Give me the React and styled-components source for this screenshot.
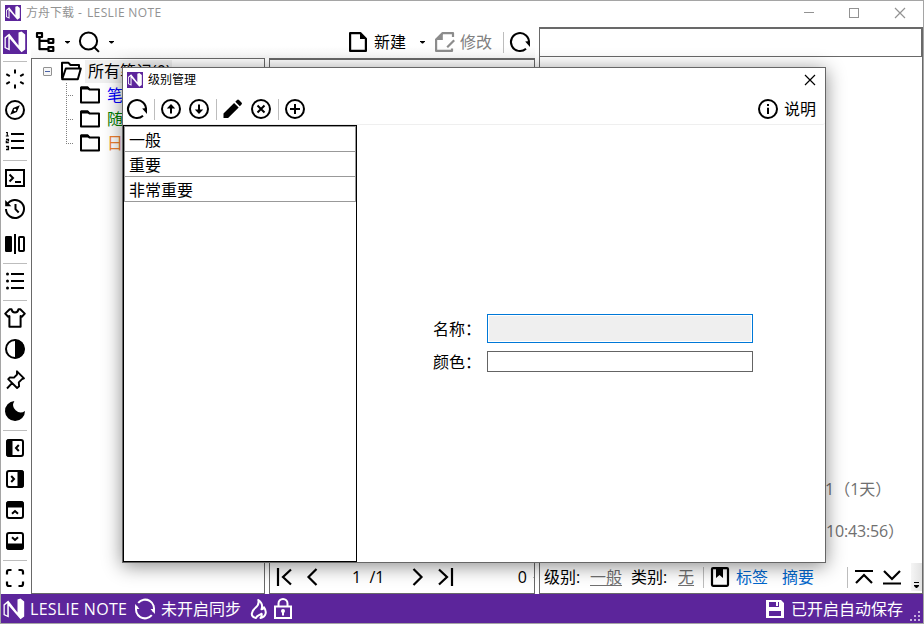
import React from "react";
import styled, { createGlobalStyle } from "styled-components";

const PURPLE = "#5c259b";
const LINE = "#696969";

const Global = createGlobalStyle`
  * { box-sizing: border-box; }
  body { margin: 0; background: #fff; overflow: hidden; }
  button { font: inherit; color: inherit; background: none; border: 0; padding: 0; }
`;

/* ---------- shared parts ---------- */

const Svg = styled.svg`
  display: block;
  flex: none;
  width: ${(p) => p.$w || 24}px;
  height: ${(p) => p.$h || p.$w || 24}px;
  margin-left: ${(p) => p.$ml || 0}px;
  color: ${(p) => p.$color || "inherit"};
`;

const Label = styled.span`
  font-size: ${(p) => p.$size || 16}px;
  line-height: 24px;
  width: ${(p) => (p.$w ? `${p.$w}px` : "auto")};
  color: ${(p) => p.$color || "inherit"};
  letter-spacing: ${(p) => p.$spacing || 0}px;
  margin-left: ${(p) => p.$ml || 0}px;
  white-space: pre;
  flex: none;
`;

const Link = styled(Label)`
  text-decoration: ${(p) => (p.$underline ? "underline" : "none")};
  text-decoration-thickness: 1px;
  text-underline-offset: 2px;
`;

const IconButton = styled.button`
  display: flex;
  align-items: center;
  height: 24px;
  flex: none;
  margin-left: ${(p) => p.$ml || 0}px;
  color: ${(p) => p.$color || "inherit"};
`;

const Divider = styled.i`
  width: 1px;
  height: ${(p) => p.$h || 21}px;
  margin-left: ${(p) => p.$ml || 0}px;
  background: #bdbdbd;
  flex: none;
`;

const Spacer = styled.i`
  flex: 1;
`;

const Caret = styled.i`
  width: 5px;
  height: 3px;
  margin-left: ${(p) => p.$ml}px;
  background: #000;
  clip-path: polygon(0 0, 100% 0, 100% 34%, 60% 100%, 40% 100%, 0 34%);
  flex: none;
`;

/* Icons are drawn on a 24-unit grid. */
const ring = <circle cx="12" cy="12" r="9" strokeWidth="2" />;
const glyphs = {
  tree: (
    <g strokeWidth="2.2" strokeLinejoin="round">
      <rect x="4" y="3.2" width="5" height="3.8" />
      <rect x="15.5" y="9" width="4.8" height="3.8" />
      <rect x="15.5" y="17.2" width="4.8" height="3.8" />
      <path d="M6.5 7v12.2h9M6.5 10.9h9" />
    </g>
  ),
  search: (
    <g strokeWidth="2">
      <circle cx="11.5" cy="11" r="8.6" />
      <path d="m17.3 17.3 4.6 4.6" />
    </g>
  ),
  file: (
    <g strokeWidth="2.2">
      <path d="M4.1 3.1h10.2l5.6 5.6v12.2H4.1z" strokeLinejoin="round" />
      <path d="M14 3v6h6z" fill="currentColor" stroke="none" />
    </g>
  ),
  edit: (
    <g strokeWidth="2.2">
      <path d="M20 7V3.1H9.6L3.1 9.6v11.3H19v-2.4" strokeLinejoin="round" />
      <path d="M9.8 3v7H3z" fill="currentColor" stroke="none" />
      <path d="m14.2 17.2 7-7" />
    </g>
  ),
  refresh: (
    <g strokeWidth="2">
      <path d="M18 18.7A9 9 0 1 1 20.9 13" />
      <path d="m17.2 11.5 4.8-.5v6z" fill="currentColor" stroke="none" />
    </g>
  ),
  sync: (
    <g strokeWidth="2">
      <path d="M5.2 5.8A9 9 0 0 1 20.4 15M18.8 18.2A9 9 0 0 1 3.6 9" />
      <path d="m17.5 12h4.4v5zM6.5 12H2.1V7z" fill="currentColor" stroke="none" />
    </g>
  ),
  spinner: (
    <path
      strokeWidth="2"
      d="M12 2.5v4M12 17.5v4M3.3 7.2l3.5 2M17.2 14.8l3.5 2M3.3 16.8l3.5-2M17.2 9.2l3.5-2"
    />
  ),
  compass: (
    <g>
      {ring}
      <path
        fillRule="evenodd"
        fill="currentColor"
        stroke="none"
        d="m16.8 7.2-2.9 6.7-6.7 2.9 2.9-6.7zM12 10.7a1.3 1.3 0 1 0 0 2.6 1.3 1.3 0 0 0 0-2.6z"
      />
    </g>
  ),
  ordered: (
    <g strokeWidth="2">
      <path d="M8 5h13M8 12h13M8 19h13" />
      <path
        strokeWidth="1.2"
        d="M3 3.5h1.3V7M2.8 7h3M3 10.3h2.5v1.7H3.3v1.7h2.5M3 17.3h2.5v3.4H3M3.5 19h2"
      />
    </g>
  ),
  terminal: (
    <g strokeWidth="2">
      <rect x="3" y="4" width="18" height="16" />
      <path d="m6.5 8.5 3.5 3.5-3.5 3.5M12 16h6" />
    </g>
  ),
  history: (
    <g strokeWidth="2">
      <path d="M4.2 7.5A9 9 0 1 1 3 12" />
      <path d="M2.2 3v6.2h6.2z" fill="currentColor" stroke="none" />
      <path d="M12.5 7v5.2l3.2 3.3" />
    </g>
  ),
  compare: (
    <g>
      <rect x="2" y="4" width="7" height="16" rx="1.2" fill="currentColor" stroke="none" />
      <path d="M12 2v20" strokeWidth="2" />
      <rect x="16" y="5" width="5" height="14" rx=".8" strokeWidth="2" />
    </g>
  ),
  list: (
    <g strokeWidth="2">
      <path d="M8 5h13M8 12h13M8 19h13" />
      <g fill="currentColor" stroke="none">
        <circle cx="4.5" cy="5" r="1.5" />
        <circle cx="4.5" cy="12" r="1.5" />
        <circle cx="4.5" cy="19" r="1.5" />
      </g>
    </g>
  ),
  shirt: (
    <path
      strokeWidth="2"
      strokeLinejoin="round"
      d="M8.5 3.2 6.7 3.2 2.2 7.6l3 3.2 1.2-.8v10.8h11.2V10l1.2.8 3-3.2-4.5-4.4h-1.8C15.2 5.5 13.8 6.5 12 6.5S8.8 5.5 8.5 3.2z"
    />
  ),
  contrast: (
    <g>
      {ring}
      <path d="M12 2.5a9.5 9.5 0 0 1 0 19z" fill="currentColor" stroke="none" />
    </g>
  ),
  pin: (
    <path
      strokeWidth="1.9"
      strokeLinejoin="round"
      d="m14 3.3 7 7-2 .8-3.2 3.2.3 4-2 1.7L5.2 11.1l1.7-1.7 4.1.2 3-3.1zM9.5 14.7 4 20.5"
    />
  ),
  moon: (
    <path
      fill="currentColor"
      stroke="none"
      d="M11.4 2a7.4 7.4 0 0 0 10.6 9.9 10 10 0 1 1-10.6-9.9z"
    />
  ),
  fullscreen: (
    <path
      strokeWidth="2.2"
      d="M4 8.5V6a2 2 0 0 1 2-2h2.5M15.5 4H18a2 2 0 0 1 2 2v2.5M20 15.5V18a2 2 0 0 1-2 2h-2.5M8.5 20H6a2 2 0 0 1-2-2v-2.5"
    />
  ),
  up: (
    <g>
      {ring}
      <path d="M12 16.5v-6" strokeWidth="2" />
      <path d="m12 7 4.2 4.5H7.8z" fill="currentColor" stroke="none" />
    </g>
  ),
  down: (
    <g>
      {ring}
      <path d="M12 7.5v6" strokeWidth="2" />
      <path d="m12 17-4.2-4.5h8.4z" fill="currentColor" stroke="none" />
    </g>
  ),
  pencil: (
    <path
      fill="currentColor"
      stroke="none"
      d="M2.500 16.500 13.100 5.900l4.600 4.600L7.100 21H2.500zM14.300 4.700l1.700-1.700a1.400 1.400 0 0 1 2 0l2.500 2.500a1.400 1.400 0 0 1 0 2l-1.700 1.700z"
    />
  ),
  cancel: (
    <g>
      {ring}
      <path d="m8.5 8.5 7 7m0-7-7 7" strokeWidth="2" />
    </g>
  ),
  plus: (
    <g>
      {ring}
      <path d="M12 7v10M7 12h10" strokeWidth="2" />
    </g>
  ),
  info: (
    <g>
      {ring}
      <path d="M12 10.8V17M12 7v2" strokeWidth="2" />
    </g>
  ),
  folder: (
    <g strokeWidth="2">
      <path d="M3 19.5v-15h6.5l2 2H21v13z" strokeLinejoin="round" />
      <path d="M3 3.5h7l2.5 3H3z" fill="currentColor" stroke="none" />
    </g>
  ),
  folderOpen: (
    <path
      strokeWidth="2"
      strokeLinejoin="round"
      d="M3 19.5V3.8h6.5l2 2.2H20v3M3.2 20.2 6.8 9.500h15l-3 10.700z"
    />
  ),
  flame: (
    <path
      strokeWidth="2"
      strokeLinejoin="round"
      d="M9 21C2.5 19.5 4.5 14 8.5 10.8c2.5-2 3.7-4.5 2.800-7.800 3.700 2.500 4.400 6 3.200 9.300 1.300 0 2.200-.8 2.500-2 3 4.200 2.300 9.200-3.500 10.700 1.300-1.500 1.500-3 1-4.300-1.500 1.500-4.500 1.300-5.500 4.300z"
    />
  ),
  lock: (
    <g strokeWidth="2">
      <path d="M4 9.5h16V21H4z" />
      <path d="M7.5 9V6.500a4.500 4.500 0 0 1 9 0V9M12 14.500v4" />
      <circle cx="12" cy="14" r="2" fill="currentColor" stroke="none" />
    </g>
  ),
  save: (
    <path
      fill="currentColor"
      stroke="none"
      fillRule="evenodd"
      d="M3 3h15l3 3v15H3zM6 5v5h10V5zM6 14v5h12v-5zM13 5h2v4h-2z"
    />
  ),
  bookmark: (
    <g>
      <rect x="4" y="3.2" width="16" height="17.6" rx="1" strokeWidth="2.2" />
      <path d="M8 3h7v10l-3.5-3L8 13z" fill="currentColor" stroke="none" />
    </g>
  ),
  first: <path strokeWidth="2.2" d="M6 3v18M19 4.5 11 12l8 7.5" />,
  prev: <path strokeWidth="2.2" d="m16.500 4-8 8 8 8" />,
  next: <path strokeWidth="2.2" d="m7.500 4 8 8-8 8" />,
  last: <path strokeWidth="2.2" d="M18 3v18M5 4.5 13 12l-8 7.5" />,
  top: <path strokeWidth="2.2" d="M3 6h18M4 18l8-8 8 8" />,
  bottom: <path strokeWidth="2.2" d="M3 18.5h18M4 6l8 8 8-8" />,
  close: <path strokeWidth="1.2" d="m7 7 10 10m0-10L7 17" />,
  minimize: <path strokeWidth="1" d="M7 11.5h10" />,
  maximize: <rect x="7.5" y="7.5" width="9" height="9" strokeWidth="1" />,
};

/* A rounded panel with one thick edge, turned towards each side of the window. */
const panelTurns = { panelLeft: 0, panelRight: 180, panelTop: 90, panelBottom: 270 };

const Icon = ({ name, size, color }) => (
  <Svg $w={size} $color={color} viewBox="0 0 24 24" fill="none" stroke="currentColor">
    {name in panelTurns ? (
      <g transform={`rotate(${panelTurns[name]} 12 12)`}>
        <rect x="4" y="4" width="16" height="16" rx="2" strokeWidth="2" />
        <path d="M4 4h5v16H4z" fill="currentColor" />
        <path d="m15.8 9-2.8 3 2.8 3" strokeWidth="2" />
      </g>
    ) : (
      glyphs[name]
    )}
  </Svg>
);

const Logo = ({ size, bare }) => (
  <Svg $w={size} viewBox="0 0 24 24">
    {!bare && <path d="M0 0h24v24H0z" fill={PURPLE} />}
    <path
      fill="#fff"
      d="M1.5 7.500 6.200 3.500 15.500 15.500V2.500l3-1 3.700 3v15l-3.700 2.800L6.800 8.700V20.500L1.500 18zM2.800 8.200v9l2.500 1.200V6.200z"
      fillRule="evenodd"
    />
  </Svg>
);

/* ---------- main window ---------- */

const Window = styled.div`
  position: relative;
  display: flex;
  flex-direction: column;
  width: 924px;
  height: 624px;
  border: 1px solid #a5a5a5;
  background: #fff;
  color: #000;
  font-family: "Open Sans", "Noto Sans CJK SC", sans-serif;
  overflow: hidden;
`;

const TitleBar = styled.header`
  display: flex;
  align-items: center;
  height: 26px;
  flex: none;
  padding: 0 11px 2px 4px;
  color: #929292;
`;

const Body = styled.main`
  display: flex;
  height: 567px;
  flex: none;
`;

const Rail = styled.nav`
  width: 30px;
  flex: none;
  display: flex;
  flex-direction: column;
`;

const RailLogo = styled.div`
  height: 30px;
  padding: 3px 2px;
`;

const RailItem = styled.button`
  display: flex;
  align-items: flex-start;
  height: ${(p) => (p.$tall ? 35 : 31)}px;
  padding: ${(p) => (p.$tall ? 8 : 4)}px 2px 0;
`;

const RailRule = styled.i`
  height: 1px;
  width: 24px;
  margin: 4px 2px 1px;
  background: #bdbdbd;
`;

const LeftSide = styled.div`
  width: 504px;
  margin-right: 4px;
  display: flex;
  flex-direction: column;
`;

const Toolbar = styled.div`
  display: flex;
  align-items: center;
  height: 31px;
  flex: none;
  padding: 0 3px 1px 2px;
  background: linear-gradient(#fff 60%, #f7f7f7);
`;

const Panes = styled.div`
  display: flex;
  gap: 4px;
  flex: 1;
`;

const TreePane = styled.section`
  width: 234px;
  border: 1px solid ${LINE};
  padding-left: 10px;
`;

const ListPane = styled.section`
  flex: 1;
  display: flex;
  flex-direction: column;
  justify-content: flex-end;
  border: 1px solid ${LINE};
  border-top-width: 2px;
`;

const BottomBar = styled.footer`
  display: flex;
  align-items: center;
  height: 30px;
  padding-bottom: 2px;
  flex: none;
`;

const RootRow = styled.div`
  display: flex;
  align-items: center;
  height: 24px;
`;

const Expander = styled.i`
  width: 9px;
  height: 9px;
  margin: 0 7px 0 1px;
  border: 1px solid #919191;
  border-radius: 1px;
  background: linear-gradient(#4b63a7, #4b63a7) center / 5px 1px no-repeat, #f6f6f6;
`;

const RootName = styled.span`
  height: 23px;
  line-height: 22px;
  width: 87px;
  margin-left: 2px;
  padding-left: 3px;
  font-size: 16px;
  background: #f0f0f0;
  white-space: nowrap;
`;

const Branch = styled.div`
  margin-left: 24px;
  width: 64px;
`;

const ChildRow = styled.div`
  display: flex;
  align-items: center;
  height: 24px;
  color: ${(p) => p.$color};
`;

const Elbow = styled.i`
  align-self: flex-start;
  width: 8px;
  margin-right: 4px;
  height: ${(p) => (p.$last ? 13 : 24)}px;
  background:
    repeating-linear-gradient(#808080 0 1px, transparent 1px 2px) 0 0 / 1px 100% no-repeat,
    repeating-linear-gradient(90deg, #808080 0 1px, transparent 1px 2px) 0 12px / 100% 1px no-repeat;
`;

const RightSide = styled.section`
  flex: 1;
  display: flex;
  flex-direction: column;
  border: 1px solid ${LINE};
  border-top-width: 2px;
`;

const NoteTitle = styled.div`
  height: 28px;
  flex: none;
  border-right: 1px solid ${LINE};
  border-bottom: 1px solid ${LINE};
`;

const NoteBody = styled.div`
  flex: 1;
  display: flex;
  flex-direction: column;
  justify-content: flex-end;
  align-items: flex-start;
  gap: 18px;
  padding: 0 0 20px 285px;
  color: #707070;
`;

const Overflow = styled.button`
  display: flex;
  flex-direction: column;
  align-items: center;
  justify-content: flex-end;
  gap: 2px;
  width: 11px;
  height: 28px;
  padding-bottom: 3px;
  background: linear-gradient(90deg, #f5f5f5, #e2e2e2);
`;

const OverflowBar = styled.i`
  width: 5px;
  height: 1px;
  background: #000;
`;

const StatusBar = styled.footer`
  display: flex;
  align-items: center;
  height: 29px;
  flex: none;
  padding: 0 2px 0 1px;
  color: #fff;
  background: ${PURPLE};
`;

/* ---------- dialog ---------- */

const Dialog = styled.div`
  position: absolute;
  left: 121px;
  top: 66px;
  width: 704px;
  height: 496px;
  display: flex;
  flex-direction: column;
  border: 1px solid #666;
  background: #fff;
  box-shadow: 0 3px 18px rgba(0, 0, 0, 0.46);
`;

const DialogTitle = styled.div`
  display: flex;
  align-items: center;
  height: 24px;
  padding: 0 3px 0 4px;
`;

const DialogTools = styled.div`
  display: flex;
  align-items: center;
  height: 33px;
  padding: 2px 9px 0 2px;
  border-bottom: 1px solid #efefef;
  border-radius: 0 0 3px 0;
`;

const DialogBody = styled.div`
  display: flex;
  flex: 1;
`;

const Levels = styled.ul`
  width: 234px;
  margin: 0;
  padding: 0;
  list-style: none;
  border: 1px solid #000;
`;

const Level = styled.li`
  height: 25px;
  padding-left: 4px;
  font-size: 16px;
  line-height: 27px;
  border: 1px solid #999;
  border-top: 0;
  &:first-child {
    border-top: 1px solid #999;
    height: 26px;
  }
`;

const Form = styled.form`
  display: grid;
  grid-template-columns: 54px 266px;
  row-gap: 7px;
  align-items: center;
  align-content: start;
  padding: 189px 0 0 76px;
`;

const NameField = styled.input`
  height: 29px;
  border: 1px solid #0078d7;
  border-radius: 0;
  outline: 0;
  box-shadow: inset 0 0 0 1px #fff;
  background: #efefef;
`;

const ColorField = styled.div`
  height: 21px;
  margin-bottom: 1px;
  border: 1px solid #646464;
`;

const railGroups = [
  ["spinner", "compass", "ordered"],
  ["terminal", "history", "compare"],
  ["list"],
  ["shirt", "contrast", "pin", "moon"],
  ["panelLeft", "panelRight", "panelTop", "panelBottom"],
  ["fullscreen"],
];

const notebooks = [
  { name: "笔", color: "#0000ff" },
  { name: "随", color: "#008000" },
  { name: "日", color: "#f08030" },
];

const ToolIcon = ({ name, ml, color, size }) => (
  <IconButton type="button" $ml={ml} $color={color}>
    <Icon name={name} size={size} />
  </IconButton>
);

const LevelDialog = () => (
  <Dialog>
    <DialogTitle>
      <Logo size={16} />
      <Label $size={12} $ml={5}>级别管理</Label>
      <Spacer />
      <ToolIcon name="close" />
    </DialogTitle>
    <DialogTools>
      <ToolIcon name="refresh" />
      <Divider $ml={5} />
      <ToolIcon name="up" ml={4} />
      <ToolIcon name="down" ml={4} />
      <Divider $ml={5} />
      <ToolIcon name="pencil" ml={4} />
      <ToolIcon name="cancel" ml={4} />
      <Divider $ml={5} />
      <ToolIcon name="plus" ml={4} />
      <Spacer />
      <ToolIcon name="info" />
      <Label $ml={4}>说明</Label>
    </DialogTools>
    <DialogBody>
      <Levels>
        {["一般", "重要", "非常重要"].map((level) => (
          <Level key={level}>{level}</Level>
        ))}
      </Levels>
      <Form>
        <Label>名称：</Label>
        <NameField readOnly />
        <Label>颜色：</Label>
        <ColorField />
      </Form>
    </DialogBody>
  </Dialog>
);

export default function App() {
  return (
    <Window>
      <Global />
      <TitleBar>
        <Logo size={16} />
        <Label $size={12} $ml={5} $w={52}>方舟下载</Label>
        <Label $size={12} $w={9}>-</Label>
        <Label $size={12} $spacing={0.35}>LESLIE NOTE</Label>
        <Spacer />
        <ToolIcon name="minimize" />
        <ToolIcon name="maximize" ml={21} />
        <ToolIcon name="close" ml={22} />
      </TitleBar>
      <Body>
        <Rail>
          <RailLogo>
            <Logo size={24} />
          </RailLogo>
          {railGroups.map((group) => (
            <React.Fragment key={group[0]}>
              <RailRule />
              {group.map((name) => (
                <RailItem key={name} $tall={name === "compare"}>
                  <Icon name={name} />
                </RailItem>
              ))}
            </React.Fragment>
          ))}
        </Rail>
        <LeftSide>
          <Toolbar>
            <ToolIcon name="tree" />
            <Caret $ml={8} />
            <ToolIcon name="search" ml={7} />
            <Caret $ml={8} />
            <Spacer />
            <ToolIcon name="file" />
            <Label $ml={4}>新建</Label>
            <Caret $ml={14} />
            <ToolIcon name="edit" ml={8} color="#8c8c8c" />
            <Label $ml={3} $color="#808080">修改</Label>
            <Divider $ml={11} />
            <ToolIcon name="refresh" ml={4} />
          </Toolbar>
          <Panes>
            <TreePane>
              <RootRow>
                <Expander />
                <Icon name="folderOpen" />
                <RootName>所有笔记(0)</RootName>
              </RootRow>
              <Branch>
                {notebooks.map((book, i) => (
                  <ChildRow key={book.name} $color={book.color}>
                    <Elbow $last={i === notebooks.length - 1} />
                    <Icon name="folder" color="#000" />
                    <Label $ml={5}>{book.name}</Label>
                  </ChildRow>
                ))}
              </Branch>
            </TreePane>
            <ListPane>
              <BottomBar>
                <ToolIcon name="first" ml={2} />
                <ToolIcon name="prev" ml={4} />
                <Label $ml={28}>1  /1</Label>
                <Spacer />
                <ToolIcon name="next" />
                <ToolIcon name="last" ml={4} />
                <Label $ml={60}>0</Label>
                <Divider $ml={6} $h={1} />
              </BottomBar>
            </ListPane>
          </Panes>
        </LeftSide>
        <RightSide>
          <NoteTitle />
          <NoteBody>
            <Label>1（1天）</Label>
            <Label $ml={1} $spacing={-0.15}>10:43:56）</Label>
          </NoteBody>
          <BottomBar>
            <Label $ml={4} $w={36}>级别:</Label>
            <Link $underline $ml={10} $color="#707070">一般</Link>
            <Label $ml={9} $w={36}>类别:</Label>
            <Link $underline $ml={11} $color="#707070">无</Link>
            <Divider $ml={9} />
            <ToolIcon name="bookmark" ml={4} />
            <Link $ml={4} $color="#0066cc">标签</Link>
            <Link $ml={14} $color="#0066cc">摘要</Link>
            <Divider $ml={33} />
            <ToolIcon name="top" ml={4} />
            <ToolIcon name="bottom" ml={4} />
            <Spacer />
            <Overflow type="button">
              <OverflowBar />
              <Caret $ml={0} />
            </Overflow>
          </BottomBar>
        </RightSide>
      </Body>
      <StatusBar>
        <Logo size={24} bare />
        <Label $ml={4} $w={97} $spacing={0.28}>LESLIE NOTE</Label>
        <ToolIcon name="sync" ml={6} />
        <Label $ml={4}>未开启同步</Label>
        <ToolIcon name="flame" ml={6} />
        <ToolIcon name="lock" />
        <Spacer />
        <ToolIcon name="save" />
        <Label $ml={4}>已开启自动保存</Label>
        <Svg $w={12} $h={26} $ml={6} viewBox="0 0 12 26" fill="#c7b0de">
          <path d="M9 15h2v2H9zM5 19h2v2H5zM9 19h2v2H9zM1 23h2v2H1zM5 23h2v2H5zM9 23h2v2H9z" />
        </Svg>
      </StatusBar>
      <LevelDialog />
    </Window>
  );
}
